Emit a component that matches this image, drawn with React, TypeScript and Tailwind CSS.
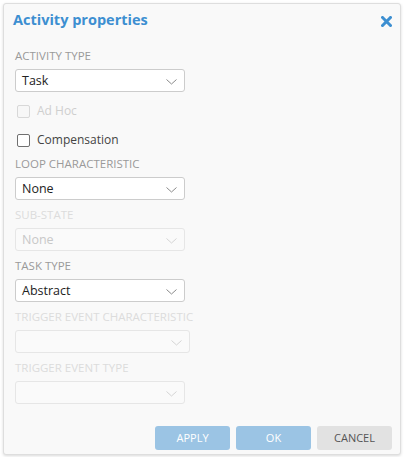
import React from "react";

const font = { fontFamily: '"Open Sans", "Noto Sans", sans-serif' };

function Chevron({ disabled }: { disabled?: boolean }) {
  return (
    <svg width="11" height="6" viewBox="0 0 11 6" className="absolute right-[7px] top-[9px]">
      <path d="M0.5 0.5 L5.5 5 L10.5 0.5" fill="none" stroke={disabled ? "#d4d4d4" : "#8a8a8a"} strokeWidth="1" />
    </svg>
  );
}

function Field({
  label,
  value,
  disabled,
  wide,
}: {
  label: string;
  value: string;
  disabled?: boolean;
  wide?: boolean;
}) {
  return (
    <div className="flex flex-col">
      <div className={`h-4 text-[11.5px] leading-4 ${disabled ? "text-[#dcdcdc]" : "text-[#9a9a9a]"}`}>{label}</div>
      <div
        className={`relative mt-[5px] h-[23px] rounded-[3px] border ${wide ? "w-[175px]" : "w-[170px]"} ${
          disabled ? "border-[#e6e6e6] bg-[#fafafa] text-[#c8c8c8]" : "border-[#cccccc] bg-white text-[#222]"
        }`}
      >
        <div className="pl-[6px] text-[12.5px] leading-[21px]">{value}</div>
        <Chevron disabled={disabled} />
      </div>
    </div>
  );
}

function Check({ label, disabled }: { label: string; disabled?: boolean }) {
  return (
    <div className="flex h-5 items-center pl-[2px]">
      <div
        className={`h-[13px] w-[13px] rounded-[2px] border-[1.5px] ${
          disabled ? "border-[#d8d8d8] bg-[#f7f7f7]" : "border-[#707070] bg-white"
        }`}
      />
      <span className={`ml-[7px] text-[12px] ${disabled ? "text-[#cfcfcf]" : "text-[#444]"}`}>{label}</span>
    </div>
  );
}

export default function App() {
  return (
    <div className="h-[457px] w-[404px] bg-white" style={font}>
      <div className="relative ml-[3px] translate-y-[3px] h-[452px] w-[398px] rounded-[3px] border border-[#dedede] bg-[#f9f9f9] shadow-[0_1px_3px_rgba(0,0,0,0.15)]">
        <div className="flex items-start justify-between pl-[9px] pr-[8px] pt-[5px]">
          <div className="text-[14.5px] font-bold leading-[22px] text-[#3d8fd1]">Activity properties</div>
          <svg width="11" height="11" viewBox="0 0 11 11" className="mt-[7px]">
            <path d="M1.5 1.5 L9.5 9.5 M9.5 1.5 L1.5 9.5" stroke="#3d8fd1" strokeWidth="3" strokeLinecap="square" />
          </svg>
        </div>
        <div className="mt-[17px] flex flex-col pl-[11px]">
          <Field label="ACTIVITY TYPE" value="Task" />
          <div className="mt-[9px] flex flex-col gap-[9px]">
            <Check label="Ad Hoc" disabled />
            <Check label="Compensation" />
          </div>
          <div className="mt-[6px] flex flex-col gap-[7px]">
            <Field label="LOOP CHARACTERISTIC" value="None" />
            <Field label="SUB-STATE" value="None" disabled />
            <Field label="TASK TYPE" value="Abstract" />
            <Field label="TRIGGER EVENT CHARACTERISTIC" value="" disabled wide />
            <Field label="TRIGGER EVENT TYPE" value="" disabled />
          </div>
        </div>
        <div className="absolute bottom-[4px] right-[8px] flex gap-[6px]">
          <button className="h-[24px] w-[75px] rounded-[3px] bg-[#9bc4e4] text-[11px] text-white">APPLY</button>
          <button className="h-[24px] w-[75px] rounded-[3px] bg-[#9bc4e4] text-[11px] text-white">OK</button>
          <button className="h-[24px] w-[75px] rounded-[3px] bg-[#e2e2e2] text-[11px] text-[#555]">CANCEL</button>
        </div>
      </div>
    </div>
  );
}
